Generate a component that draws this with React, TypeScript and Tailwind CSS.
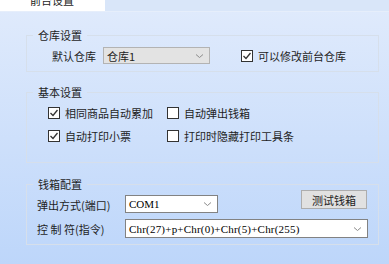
const font = { fontFamily: '"Noto Sans CJK SC", "Noto Sans", sans-serif' };

function Chevron() {
  return (
    <svg width="9" height="6" viewBox="0 0 9 6" className="shrink-0">
      <path d="M1 1.5L4.5 4.5L8 1.5" fill="none" stroke="#8c8c8c" strokeWidth="1" />
    </svg>
  );
}

function Check({ checked, label }: { checked?: boolean; label: string }) {
  return (
    <div className="flex items-center h-[15px] gap-[5px]">
      <div className="w-[12px] h-[12px] border border-[#333] bg-white flex items-center justify-center shrink-0">
        {checked && (
          <svg width="10" height="10" viewBox="0 0 10 10">
            <path d="M1.5 5L4 7.5L8.5 2" fill="none" stroke="#333" strokeWidth="1.3" />
          </svg>
        )}
      </div>
      <span className="text-[11px] leading-[14px] text-[#1e1e1e] whitespace-nowrap">{label}</span>
    </div>
  );
}

function GroupBox({ title, className = "", children }: { title: string; className?: string; children: React.ReactNode }) {
  return (
    <fieldset className={`border border-[#d6dfeb] px-[6px] ${className}`}>
      <legend className="px-[5px] text-[11px] leading-[14px] text-[#1e1e1e]">{title}</legend>
      {children}
    </fieldset>
  );
}

export default function App() {
  return (
    <div className="w-[389px] h-[264px] flex flex-col overflow-hidden" style={font}>
      {/* tab strip */}
      <div className="flex h-[12px] shrink-0 bg-[#d9e6f9] border-b border-[#e6eefb]">
        <div className="w-[105px] h-[11px] bg-white overflow-hidden">
          <div className="-mt-[7px] pl-[30px] text-[11px] leading-[14px] text-[#1e1e1e]">前台设置</div>
        </div>
      </div>

      {/* panel */}
      <div className="flex-1 bg-gradient-to-b from-[#dfeafc] to-[#bdd6fa] pl-[26px] pr-[10px] pt-[16px]">
        <GroupBox title="仓库设置" className="pb-[7px]">
          <div className="flex items-center ml-[19px] mt-[5px]">
            <span className="w-[51px] text-[11px] leading-[14px] text-[#1e1e1e]">默认仓库</span>
            <div className="w-[107px] h-[17px] bg-[#e3e3e3] border border-[#b3b3b3] flex items-center justify-between pl-[3px] pr-[5px]">
              <span className="text-[11px] leading-[14px] text-[#1e1e1e]">仓库1</span>
              <Chevron />
            </div>
            <div className="ml-[31px]">
              <Check checked label="可以修改前台仓库" />
            </div>
          </div>
        </GroupBox>

        <GroupBox title="基本设置" className="mt-[13px] pb-[19px]">
          <div className="grid grid-cols-[119px_auto] gap-y-[8px] ml-[15px] mt-[6px]">
            <Check checked label="相同商品自动累加" />
            <Check label="自动弹出钱箱" />
            <Check checked label="自动打印小票" />
            <Check label="打印时隐藏打印工具条" />
          </div>
        </GroupBox>

        <GroupBox title="钱箱配置" className="mt-[14px] pb-[6px]">
          <div className="pr-[4px] -mt-[1px]">
            <div className="flex items-start">
              <span className="ml-[4px] w-[88px] mt-[8px] text-[11px] leading-[14px] text-[#1e1e1e] whitespace-nowrap">弹出方式(端口)</span>
              <div className="mt-[5px] w-[93px] h-[18px] bg-white border border-[#828282] flex items-center justify-between pl-[3px] pr-[5px]">
                <span className="text-[11px] leading-[14px] text-black" style={{ fontFamily: '"Liberation Serif", serif' }}>COM1</span>
                <Chevron />
              </div>
              <button className="ml-auto mr-[1px] w-[66px] h-[19px] bg-[#e1e1e1] border border-[#adadad] text-[11px] leading-[14px] text-[#1e1e1e]">
                测试钱箱
              </button>
            </div>
            <div className="flex items-center mt-[6px]">
              <span className="ml-[4px] w-[88px] text-[11px] leading-[14px] text-[#1e1e1e] whitespace-nowrap">控&nbsp;制&nbsp;符(指令)</span>
              <div className="flex-1 h-[19px] bg-white border border-[#828282] flex items-center justify-between pl-[3px] pr-[5px]">
                <span className="text-[11px] leading-[14px] text-black tracking-[0.2px]" style={{ fontFamily: '"Liberation Serif", serif' }}>
                  Chr(27)+p+Chr(0)+Chr(5)+Chr(255)
                </span>
                <Chevron />
              </div>
            </div>
          </div>
        </GroupBox>
      </div>
    </div>
  );
}
